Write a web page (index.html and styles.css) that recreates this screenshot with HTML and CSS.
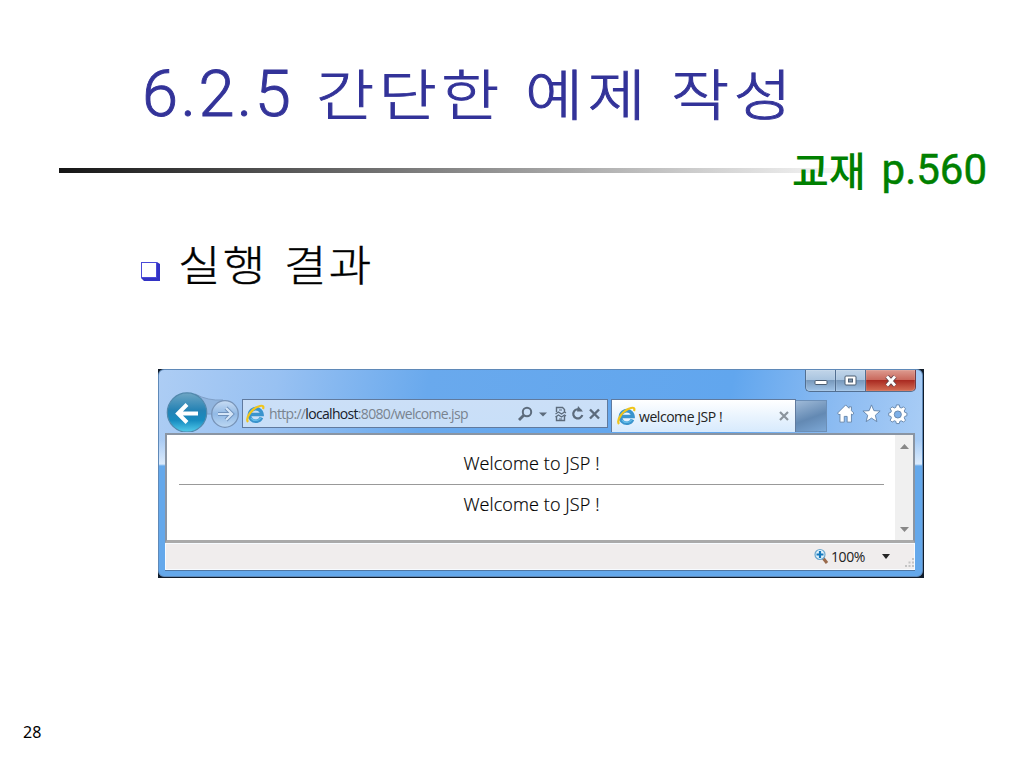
FILE: index.html
```html
<!DOCTYPE html>
<html lang="ko">

<head>
    <meta charset="UTF-8">
    <meta name="viewport" content="width=device-width, initial-scale=1.0">
    <title>6.2.5 간단한 예제 작성</title>
    <link rel="stylesheet" href="styles.css">
</head>

<body>
    <div class="slide">
        <h1 class="title"><span class="title-number">6.2.5</span><span class="word word-1">간단한</span><span class="word word-2">예제</span><span class="word word-3">작성</span></h1>

        <div class="divider">
            <div class="divider-line"></div>
            <div class="page-ref"><span>교재</span><span class="page-ref-number">p.560</span></div>
        </div>

        <div class="bullet">
            <svg class="bullet-icon" width="21" height="21" viewBox="0 0 21 21">
                <path d="M1 1h16l3 2v17H4l-3-3z" fill="#3333c4" />
                <rect x="1.500" y="1.500" width="15" height="15" fill="#fff" stroke="#4a4ad8" />
            </svg>
            <span class="bullet-word">실행</span><span class="bullet-word">결과</span>
        </div>

        <!-- Browser window -->
        <div class="browser">
            <div class="window">
                <div class="caption">
                    <div class="caption-btn min"><svg width="15" height="7" viewBox="0 0 15 7"><rect x="1" y="1.5" width="12" height="4" rx="1" fill="#fff" stroke="#4b5c70" /></svg></div>
                    <div class="caption-btn max"><svg width="13" height="11" viewBox="0 0 13 11"><rect x="1" y="1" width="11" height="9" rx="1" fill="#fff" stroke="#4b5c70" /><rect x="4.5" y="4" width="4" height="3" fill="#7e95ad" stroke="#4b5c70" /></svg></div>
                    <div class="caption-btn close"><svg width="14" height="12" viewBox="0 0 14 12"><path d="M3 1.500l8 9M11 1.500l-8 9" stroke="#65434a" stroke-width="4.6" /><path d="M3 1.500l8 9M11 1.500l-8 9" stroke="#fff" stroke-width="2.8" /></svg></div>
                </div>

                <div class="toolbar">
                    <svg class="nav" width="77" height="41" viewBox="0 0 77 41">
                        <defs>
                            <linearGradient id="back" x1="0" y1="0" x2="0" y2="1">
                                <stop offset="0" stop-color="#6fa6c4" />
                                <stop offset=".45" stop-color="#2482b4" />
                                <stop offset=".7" stop-color="#178cc0" />
                                <stop offset="1" stop-color="#55cdec" />
                            </linearGradient>
                            <linearGradient id="forward" x1="0" y1="0" x2="0" y2="1">
                                <stop offset="0" stop-color="#c8dcf3" />
                                <stop offset=".5" stop-color="#91b9e5" />
                                <stop offset="1" stop-color="#bdd8f3" />
                            </linearGradient>
                        </defs>
                        <path d="M29 3q13 7 28 6v14H36z" fill="#91b5df" stroke="#7f9fc7" />
                        <circle cx="21" cy="21.500" r="19.700" fill="url(#back)" stroke="#5289ad" stroke-width="1.2" />
                        <path d="M32 22.500H13M21 13.500l-9 9 9 9" fill="none" stroke="#fff" stroke-width="4" />
                        <circle cx="59" cy="23" r="13.3" fill="url(#forward)" stroke="#7894b8" stroke-width="1.3" />
                        <path d="M52 23h13M60 17l6 6-6 6" fill="none" stroke="#6f91bb" stroke-width="4" />
                        <path d="M52 23h13M60 17l6 6-6 6" fill="none" stroke="#d5e6f8" stroke-width="2.2" />
                    </svg>

                    <div class="address">
                        <svg class="ie" width="19" height="20" viewBox="0 0 19 20">
                            <path d="M15.5 13.5A6.3 6.3 0 1 1 16 10.5H5" fill="none" stroke="#3a94cd" stroke-width="3.6" />
                            <path d="M15 13.5A6 6 0 0 1 5 14" fill="none" stroke="#62bce9" stroke-width="1.3" />
                            <path d="M2 18C-1 14 6 4 14 2c3-.8 4 .5 3 3" fill="none" stroke="#f0c51c" stroke-width="2.2" />
                        </svg>
                        <span class="url">http://<b>localhost</b>:8080/welcome.jsp</span>
                        <svg class="address-icons" width="86" height="20" viewBox="0 0 86 20">
                            <g fill="none" stroke="#5c6b7c">
                                <circle cx="10" cy="8" r="4.2" stroke-width="2" />
                                <path d="M7 11l-5 5" stroke-width="2.8" />
                                <path d="M39.500 8V3.500h6l2 2V8M39.500 12v4.500h8V12" stroke-width="1.400" />
                                <path d="M38.500 10l3-2 3 2 3-2 1.500 1M38.500 13l3-2 3 2 3-2 1.500 1M42 6h3M42 15h3" stroke-width="1.200" />
                                <path d="M64 6.500A4.600 4.600 0 1 0 65.300 11" stroke-width="2.200" />
                                <path d="M73 5.500l9 9M82 5.500l-9 9" stroke-width="2.400" />
                            </g>
                            <path d="M22 8.500h8l-4 4zM61 2l5 5.500h-6z" fill="#5c6b7c" />
                        </svg>
                    </div>

                    <div class="tab">
                        <svg class="ie" width="19" height="20" viewBox="0 0 19 20">
                            <path d="M15.5 13.5A6.3 6.3 0 1 1 16 10.5H5" fill="none" stroke="#3a94cd" stroke-width="3.6" />
                            <path d="M15 13.5A6 6 0 0 1 5 14" fill="none" stroke="#62bce9" stroke-width="1.3" />
                            <path d="M2 18C-1 14 6 4 14 2c3-.8 4 .5 3 3" fill="none" stroke="#f0c51c" stroke-width="2.2" />
                        </svg>
                        <span class="tab-title">welcome JSP !</span>
                        <svg class="tab-close" width="10" height="10" viewBox="0 0 10 10"><path d="M1 1l8 8M9 1L1 9" stroke="#8b949d" stroke-width="2.2" /></svg>
                    </div>
                    <div class="new-tab"></div>

                    <svg class="tools" width="74" height="22" viewBox="0 0 75 23">
                        <g fill="#fff" stroke="#6686ac" stroke-width="1" stroke-linejoin="round">
                            <path d="M10 2L1.500 10.500l1.500 2 1-1V20h4.500v-6h3v6H16v-8.500l1 1 1.500-2L16 8V4h-2.500v1.500z" />
                            <path d="M37 2l2.500 6 6.500.4-5 4.400 1.600 6.700-5.600-3.700-5.600 3.700 1.600-6.700-5-4.400 6.500-.4z" />
                            <path d="M63 2h3l.6 2.600 1.500.6L70.500 4l2 2-1.300 2.300.6 1.500 2.200.7v2.800l-2.200.7-.6 1.500L72.500 18l-2 2-2.400-1.400-1.500.6L66 21.500h-3l-.6-2.300-1.500-.6L58.500 20l-2-2 1.300-2.500-.6-1.500-2.200-.7v-2.800l2.200-.7.6-1.500L56.500 6l2-2 2.400 1.200 1.500-.6z" />
                            <circle cx="64.500" cy="12" r="3.700" fill="#7eb0e8" />
                        </g>
                    </svg>
                </div>

                <div class="viewport">
                    <div class="page">
                        <p>Welcome to JSP !</p>
                        <hr>
                        <p>Welcome to JSP !</p>
                    </div>
                    <div class="scrollbar">
                        <svg width="9" height="5" viewBox="0 0 9 5"><path d="M0 5l4.500-5L9 5z" fill="#888" /></svg>
                        <svg width="9" height="5" viewBox="0 0 9 5"><path d="M0 0h9L4.500 5z" fill="#888" /></svg>
                    </div>
                </div>

                <div class="status">
                    <svg width="15" height="17" viewBox="0 0 15 17">
                        <path d="M9 10l4 5" stroke="#9a6a4c" stroke-width="3" />
                        <circle cx="6" cy="6.500" r="5" fill="#e2f3fc" stroke="#6ba8cf" stroke-width="1.200" />
                        <path d="M6 3v7M2.500 6.500h7" stroke="#1679bd" stroke-width="2.200" />
                    </svg>
                    <span class="zoom">100%</span>
                    <svg class="zoom-arrow" width="8" height="5" viewBox="0 0 8 5"><path d="M0 0h8L4 5z" fill="#252525" /></svg>
                    <svg class="grip" width="9" height="9" viewBox="0 0 9 9"><path d="M7 0h2v2H7zM7 3.500h2v2H7zM7 7h2v2H7zM3.500 3.500h2v2h-2zM3.500 7h2v2h-2zM0 7h2v2H0z" fill="#c4c4c4" /></svg>
                </div>
            </div>
        </div>

        <div class="slide-number">28</div>
    </div>
</body>

</html>
```
FILE: styles.css
```css
* {
    margin: 0;
    padding: 0;
    box-sizing: border-box;
}

body {
    background-color: #fff;
    font-family: "Noto Sans CJK KR", sans-serif;
}

svg {
    display: block;
    flex: none;
}

.slide {
    width: 1024px;
    height: 768px;
    overflow: hidden;
    display: flex;
    flex-direction: column;
}

/* Title */
.title {
    display: flex;
    height: 148px;
    padding: 51px 0 0 142px;
    color: #333399;
    font-size: 55px;
    font-weight: 300;
    line-height: 80px;
    white-space: nowrap;
    -webkit-text-stroke: 0.9px #333399;
}

.title-number {
    width: 174px;
    padding-top: 3px;
    font-family: Roboto, sans-serif;
    font-size: 65px;
    letter-spacing: 2.4px;
}

.word {
    letter-spacing: 3.8px;
    transform: scaleX(1.15);
    transform-origin: left;
}

.word-1 {
    width: 209px;
}

.word-2 {
    width: 146px;
}

/* Divider and page reference share one cell */
.divider {
    display: grid;
    grid-template-rows: 46px;
    height: 46px;
    align-items: center;
}

.divider > * {
    grid-area: 1 / 1;
}

.divider-line {
    width: 810px;
    height: 5px;
    margin-left: 59px;
    margin-bottom: 1px;
    background: linear-gradient(to right, #151515, #fff);
}

.page-ref {
    display: flex;
    gap: 16px;
    margin-left: 792px;
    margin-bottom: 4px;
    color: #008000;
    font-size: 40px;
    font-weight: 500;
    line-height: 42px;
    white-space: nowrap;
}

.page-ref-number {
    padding-top: 1px;
    font-family: Roboto, sans-serif;
    font-size: 42px;
    font-weight: 400;
    -webkit-text-stroke: 0.5px #008000;
}

/* Bullet */
.bullet {
    display: flex;
    height: 175px;
    padding: 38px 0 0 140px;
    font-size: 42px;
    font-weight: 300;
    line-height: 62px;
    letter-spacing: 2px;
    -webkit-text-stroke: 0.4px #000;
}

.bullet-icon {
    margin: 29px 17px 0 0;
}

.bullet-word {
    width: 106px;
    transform: scaleX(1.1);
    transform-origin: left;
}

/* Browser window */
.browser {
    width: 766px;
    height: 209px;
    margin-left: 158px;
    background-color: #101c2b;
    flex: none;
}

.window {
    display: flex;
    flex-direction: column;
    width: 765px;
    height: 208px;
    padding: 0 7px 0 6px;
    border: 1px solid #5f89b8;
    border-radius: 6px;
    background: linear-gradient(to bottom, transparent 70px, rgba(235, 245, 255, 0.75) 94px, #64a8eb 96px), linear-gradient(100deg, #adcdf4 0, #98c1f2 15%, #69a9ed 34%, #61a6ee 72%, #8dbcf2 86%, #b0d1f6 100%);
    font-family: "Open Sans", sans-serif;
}

.caption {
    display: flex;
    justify-content: flex-end;
    height: 21px;
}

.caption-btn {
    display: flex;
    align-items: center;
    justify-content: center;
    width: 30px;
    height: 22px;
    border: 1px solid #526f91;
    border-top: 0;
    border-right: 0;
    background: linear-gradient(#c1d5e9 0, #a9c4df 48%, #7899bc 50%, #a0c3e7 100%);
    box-shadow: inset 0 0 1px #fff;
}

.min {
    border-bottom-left-radius: 5px;
}

.min svg {
    margin-top: 4px;
    margin-left: 2px;
}

.close {
    width: 51px;
    margin-right: -1px;
    border-right: 1px solid #713b45;
    border-bottom-right-radius: 5px;
    background: linear-gradient(#dd9b90 0, #c9685c 47%, #aa2b22 50%, #d36e55 100%);
}

.toolbar {
    display: flex;
    height: 42px;
}

.nav {
    margin-left: 1px;
}

.address {
    display: flex;
    align-items: center;
    width: 366px;
    height: 29px;
    margin-top: 8px;
    margin-left: -1px;
    padding-left: 3px;
    border: 1px solid #607a9e;
    background: linear-gradient(#cbdff7, #c8dff8);
}

.url {
    width: 248px;
    margin-left: 4px;
    color: #79838f;
    font-size: 14px;
    letter-spacing: -0.68px;
    white-space: nowrap;
}

.url b {
    color: #17202a;
    font-weight: 400;
}

.tab {
    display: flex;
    align-items: center;
    width: 185px;
    height: 33px;
    margin-top: 8px;
    margin-left: 3px;
    padding-left: 5px;
    border: 1px solid #607a9e;
    border-bottom: 0;
    background: linear-gradient(#fff, #eaf4fe 50%, #d7eafd);
}

.tab-title {
    width: 140px;
    margin-left: 3px;
    color: #222;
    font-size: 14px;
    letter-spacing: -0.45px;
    white-space: nowrap;
}

.new-tab {
    width: 31px;
    height: 32px;
    margin-top: 9px;
    border: 1px solid #6c8fb7;
    border-left: 0;
    background: linear-gradient(160deg, #9fbad8, #6389b3 55%, #7ca7d5);
}

.tools {
    margin: 12px 0 0 8px;
}

/* Page area */
.viewport {
    display: flex;
    height: 110px;
    border: 2px solid #8a95a3;
    border-bottom: 3px solid #aaa;
    background-color: #fff;
}

.page {
    flex: 1;
    padding: 15px 11px 0 12px;
    color: #000;
    font-size: 18px;
    font-weight: 300;
    line-height: 27px;
    text-align: center;
    letter-spacing: 0.1px;
    -webkit-text-stroke: 0.2px #000;
}

.page hr {
    height: 1px;
    margin: 7px 0 6px;
    border: 0;
    background-color: #999;
}

.scrollbar {
    display: flex;
    flex-direction: column;
    align-items: center;
    justify-content: space-between;
    width: 18px;
    padding: 9px 0 8px;
    background-color: #f0f0f0;
}

/* Status bar */
.status {
    display: flex;
    align-items: center;
    height: 27px;
    padding-left: 648px;
    border: 1px solid #f7fbff;
    box-shadow: 0 1px 0 #5077a3;
    background-color: #f0eded;
}

.zoom {
    width: 53px;
    margin-left: 2px;
    color: #222;
    font-size: 14px;
    letter-spacing: -0.4px;
}

.grip {
    margin: 12px 0 0 15px;
}

.slide-number {
    margin: 143px 0 0 23px;
    font-family: "Noto Sans", sans-serif;
    font-size: 16px;
    line-height: 22px;
}
```
